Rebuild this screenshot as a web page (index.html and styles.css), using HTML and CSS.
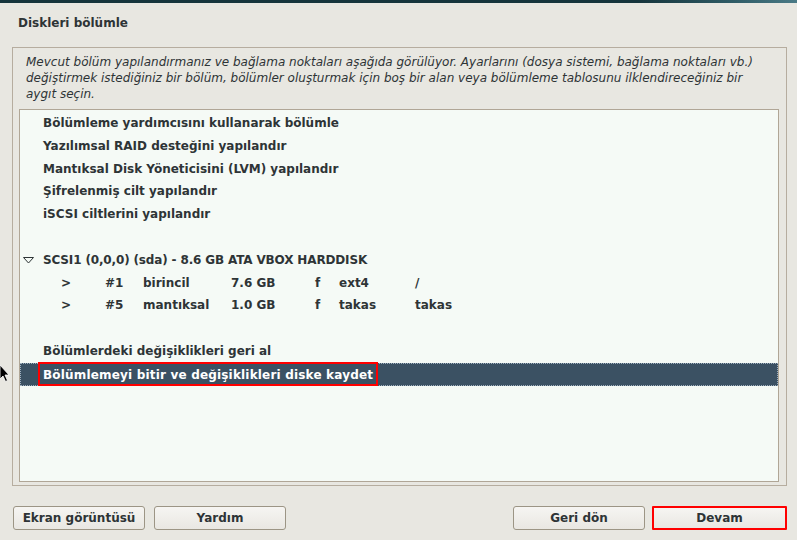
FILE: index.html
```html
<!DOCTYPE html>
<html lang="tr">
<head>
<meta charset="utf-8">
<link rel="stylesheet" href="styles.css">
</head>
<body>
<div class="topbar"></div>
<div class="page">
  <h1 class="title">Diskleri bölümle</h1>
  <div class="frame">
    <p class="intro">Mevcut bölüm yapılandırmanız ve bağlama noktaları aşağıda görülüyor. Ayarlarını (dosya sistemi, bağlama noktaları vb.) değiştirmek istediğiniz bir bölüm, bölümler oluşturmak için boş bir alan veya bölümleme tablosunu ilklendireceğiniz bir aygıt seçin.</p>
    <div class="list">
      <div class="row">Bölümleme yardımcısını kullanarak bölümle</div>
      <div class="row">Yazılımsal RAID desteğini yapılandır</div>
      <div class="row">Mantıksal Disk Yöneticisini (LVM) yapılandır</div>
      <div class="row">Şifrelenmiş cilt yapılandır</div>
      <div class="row">iSCSI ciltlerini yapılandır</div>
      <div class="row"></div>
      <div class="row disk"><svg class="tri" width="11" height="8" viewBox="0 0 11 8"><path d="M0.5 1.5 H10.5 L5.5 7 Z" fill="none" stroke="#2e3436" stroke-width="1"/></svg><span class="disk-label">SCSI1 (0,0,0) (sda) - 8.6 GB ATA VBOX HARDDISK</span></div>
      <div class="row part"><span class="c1">&gt;</span><span class="c2">#1</span><span class="c3">birincil</span><span class="c4">7.6 GB</span><span class="c5">f</span><span class="c6">ext4</span><span class="c7">/</span></div>
      <div class="row part"><span class="c1">&gt;</span><span class="c2">#5</span><span class="c3">mantıksal</span><span class="c4">1.0 GB</span><span class="c5">f</span><span class="c6">takas</span><span class="c7">takas</span></div>
      <div class="row"></div>
      <div class="row">Bölümlerdeki değişiklikleri geri al</div>
      <div class="row selected"><span class="hl">Bölümlemeyi bitir ve değişiklikleri diske kaydet</span></div>
    </div>
  </div>
  <div class="buttons">
    <div class="group">
      <button class="btn">Ekran görüntüsü</button>
      <button class="btn">Yardım</button>
    </div>
    <div class="group right">
      <button class="btn">Geri dön</button>
      <button class="btn primary">Devam</button>
    </div>
  </div>
</div>
<svg class="cursor" width="10" height="18" viewBox="0 0 10 18"><path d="M0 0 V14 L3 11 L5.5 16.5 L7.5 15.5 L5 10 H9 Z" fill="#000" stroke="#fff" stroke-width="0.8"/></svg>
</body>
</html>
```
FILE: styles.css
```css
* { box-sizing: border-box; }
html, body { margin: 0; padding: 0; }
body {
  width: 797px;
  height: 540px;
  overflow: hidden;
  background: #e8e7e1;
  font-family: "DejaVu Sans", sans-serif;
  color: #2e3436;
  position: relative;
}
.topbar {
  height: 3px;
  background: linear-gradient(to right, #16353c 0%, #16353c 80%, #2f5c66 92%, #4a7a86 100%);
}
.page {
  padding: 0 10px 0 12px;
}
.title {
  margin: 0;
  padding: 13px 0 0 6px;
  height: 44px;
  font-size: 12px;
  font-weight: bold;
  line-height: 14px;
}
.frame {
  border: 1px solid #b6ad9f;
  height: 439px;
  padding: 5px 7px 0 6px;
}
.intro {
  margin: 1px 0 0 7px;
  width: 735px;
  font-size: 12px;
  font-style: italic;
  line-height: 16px;
  height: 55px;
}
.list {
  border: 1px solid #b0a696;
  background: #f5faf6;
  height: 373px;
  padding-top: 2px;
  font-size: 12px;
  font-weight: bold;
}
.row {
  height: 22.8px;
  line-height: 22.8px;
  padding-left: 23px;
  white-space: nowrap;
  position: relative;
}
.disk {
  padding-left: 3px;
}
.disk-label {
  letter-spacing: -0.15px;
}
.tri {
  display: inline-block;
  margin-right: 9px;
}
.part span {
  display: inline-block;
}
.part .c1 { padding-left: 18px; width: 62px; }
.part .c2 { width: 38px; }
.part .c3 { width: 88px; }
.part .c4 { width: 84px; }
.part .c5 { width: 24px; }
.part .c6 { width: 76px; }
.selected {
  background: #3b5163;
  color: #ffffff;
  outline: 1px dotted #9fb0bf;
  outline-offset: -1px;
}
.hl {
  position: absolute;
  left: 18px;
  top: -1px;
  height: 24px;
  line-height: 22px;
  padding: 0 3px;
  border: 2px solid #ff0000;
  letter-spacing: 0.18px;
}
.buttons {
  display: flex;
  justify-content: space-between;
  padding-top: 20px;
  padding-left: 1px;
}
.group {
  display: flex;
  gap: 9px;
}
.group.right {
  gap: 7px;
}
.btn {
  width: 132px;
  height: 24px;
  border: 1px solid #9c9585;
  border-radius: 3px;
  background: linear-gradient(#f6f5f2, #e9e7e2);
  font-family: "DejaVu Sans", sans-serif;
  font-size: 12px;
  font-weight: bold;
  color: #2e3436;
  padding: 0;
}
.btn.primary {
  width: 135px;
  border: 2px solid #ff0000;
  border-radius: 1px;
}
.cursor {
  position: absolute;
  left: 0;
  top: 365px;
}
```
